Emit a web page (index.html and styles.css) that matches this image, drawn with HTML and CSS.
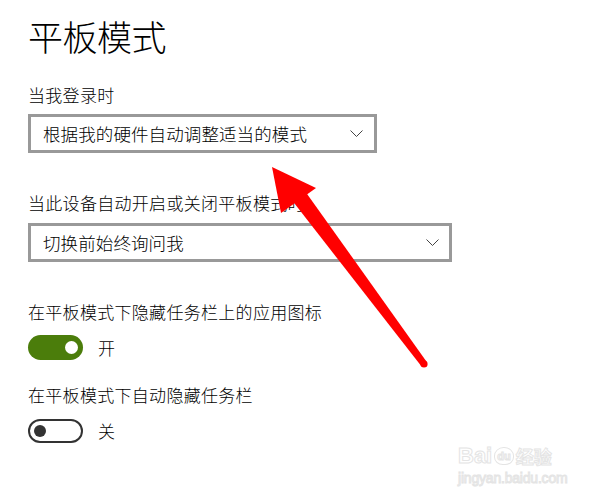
FILE: index.html
```html
<!DOCTYPE html>
<html lang="zh-CN">
<head>
<meta charset="utf-8">
<title>平板模式</title>
<link rel="stylesheet" href="styles.css">
</head>
<body>
<main class="page">
  <h1 class="title">平板模式</h1>

  <div class="label l1">当我登录时</div>
  <div class="select s1">
    <span class="select-text">根据我的硬件自动调整适当的模式</span>
    <svg class="chev" width="13" height="8" viewBox="0 0 13 8"><path d="M0.5 0.5 L6.5 6.5 L12.5 0.5" fill="none" stroke="#444" stroke-width="1"/></svg>
  </div>

  <div class="label l2">当此设备自动开启或关闭平板模式时</div>
  <div class="select s2">
    <span class="select-text">切换前始终询问我</span>
    <svg class="chev" width="13" height="8" viewBox="0 0 13 8"><path d="M0.5 0.5 L6.5 6.5 L12.5 0.5" fill="none" stroke="#444" stroke-width="1"/></svg>
  </div>

  <div class="label l3">在平板模式下隐藏任务栏上的应用图标</div>
  <div class="toggle-row t1">
    <span class="toggle on"><span class="knob"></span></span>
    <span class="toggle-text">开</span>
  </div>

  <div class="label l4">在平板模式下自动隐藏任务栏</div>
  <div class="toggle-row t2">
    <span class="toggle off"><span class="knob"></span></span>
    <span class="toggle-text">关</span>
  </div>
</main>

<svg class="arrow" width="600" height="500" viewBox="0 0 600 500">
  <polygon points="272,167 316,188 281,213" fill="#ff0000"/>
  <polygon points="304.4,190.2 426.8,361.9 421.2,366.1 291.6,199.8" fill="#ff0000"/>
  <circle cx="424" cy="364" r="3.6" fill="#ff0000"/>
</svg>

<div class="watermark">
  <div class="wm-top"><span class="wm-bai">Bai</span><span class="wm-du">du</span><span class="wm-jy">经验</span></div>
  <div class="wm-url">jingyan.baidu.com</div>
</div>
</body>
</html>
```

FILE: styles.css
```css
html, body {
  margin: 0;
  padding: 0;
  background: #ffffff;
}

body {
  width: 600px;
  height: 500px;
  overflow: hidden;
  position: relative;
  font-family: "Noto Sans CJK SC", "Noto Sans", sans-serif;
  font-weight: 300;
  color: #000;
}

.page {
  padding: 16px 0 0 28px;
  display: flex;
  flex-direction: column;
  align-items: flex-start;
}

.title {
  margin: 0;
  font-size: 35px;
  font-weight: 300;
  line-height: 40px;
  height: 40px;
  letter-spacing: -0.5px;
}

.label {
  font-size: 17px;
  line-height: 24px;
  height: 24px;
  letter-spacing: 0.3px;
}

.l1 { margin-top: 27px; }
.l2 { margin-top: 38px; }
.l3 { margin-top: 38px; }
.l4 { margin-top: 23px; }

.select {
  box-sizing: border-box;
  height: 39px;
  border: 3px solid #999999;
  display: flex;
  align-items: center;
  justify-content: space-between;
  padding: 0 12px 0 12px;
}

.s1 { width: 349px; margin-top: 7px; }
.s2 { width: 424px; margin-top: 8px; }

.select-text {
  font-size: 17.5px;
  line-height: 24px;
  letter-spacing: 0.1px;
}

.s1 .chev { margin-right: -1px; }
.s2 .chev { margin-right: -2px; }

.toggle-row {
  display: flex;
  align-items: center;
  gap: 15px;
}

.t1 { margin-top: 11px; }
.t2 { margin-top: 12px; }

.toggle {
  box-sizing: border-box;
  width: 55px;
  height: 25px;
  border-radius: 13px;
  display: flex;
  align-items: center;
}

.toggle.on {
  background: #4b7d0b;
  justify-content: flex-end;
  padding-right: 5px;
}

.toggle.on .knob {
  width: 13px;
  height: 13px;
  border-radius: 50%;
  background: #ffffff;
}

.toggle.off {
  height: 24px;
  border: 2.5px solid #333333;
  background: #fff;
  padding-left: 4px;
}

.toggle.off .knob {
  width: 12px;
  height: 12px;
  border-radius: 50%;
  background: #333333;
}

.toggle-text {
  font-size: 17px;
  line-height: 24px;
}

.arrow {
  position: absolute;
  left: 0;
  top: 0;
  pointer-events: none;
}

.watermark {
  position: absolute;
  left: 458px;
  top: 438px;
  width: 112px;
  color: #ffffff;
  font-family: "Liberation Sans", Arial, sans-serif;
  -webkit-text-stroke: 1px #e4e4e4;
}

.wm-top {
  display: flex;
  align-items: flex-end;
  height: 30px;
}

.wm-bai {
  font-size: 22px;
  font-weight: 700;
  line-height: 24px;
}

.wm-du {
  font-size: 11px;
  font-weight: 700;
  line-height: 14px;
  border: 1px solid #e4e4e4;
  border-radius: 50% 50% 45% 45%;
  padding: 1px 2px;
  margin: 0 2px 3px 2px;
}

.wm-jy {
  font-family: "Noto Sans CJK SC", sans-serif;
  font-size: 18px;
  font-weight: 700;
  line-height: 24px;
}

.wm-url {
  font-size: 14px;
  line-height: 18px;
  margin-top: 1px;
  letter-spacing: -0.2px;
}
```
